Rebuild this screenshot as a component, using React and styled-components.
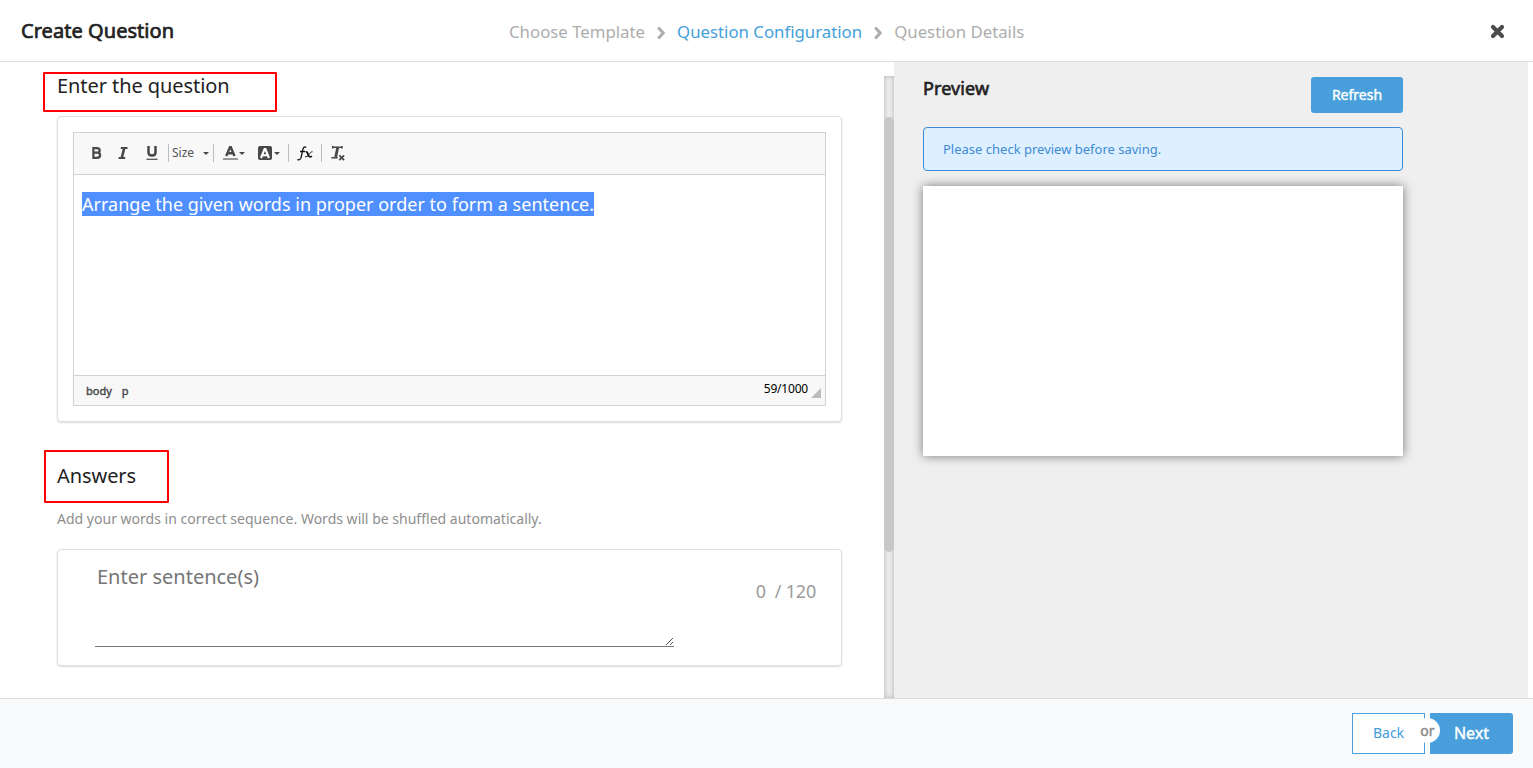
import React from 'react';
import styled, { createGlobalStyle } from 'styled-components';

const GlobalStyle = createGlobalStyle`
  *, *::before, *::after { box-sizing: border-box; }
  body { margin: 0; background: #fff; font-family: "Noto Sans", sans-serif; color: #222; }
`;

const Page = styled.div`
  display: flex;
  flex-direction: column;
  width: 1533px;
  height: 768px;
  overflow: hidden;
`;

const Header = styled.header`
  display: flex;
  align-items: center;
  height: 62px;
  padding: 0 28px 0 21px;
  border-bottom: 1px solid #dcdcdc;
`;

const Title = styled.h1`
  width: 488px;
  margin: 0;
  font-size: 20px;
  font-weight: 400;
  line-height: 28px;
  letter-spacing: 0.05px;
  -webkit-text-stroke: 0.7px #222;
`;

const Steps = styled.nav`
  display: flex;
  align-items: center;
  flex: 1;
  padding-top: 3px;
  font-size: 16.8px;
  line-height: 24px;
  white-space: nowrap;
`;

const Step = styled.span`
  color: ${(p) => (p.$active ? '#43a0da' : '#adadad')};
`;

const StepArrow = styled.svg`
  width: 10px;
  height: 14px;
  margin: 1px 11px 0;
`;

const CloseButton = styled.button`
  display: flex;
  padding: 0;
  margin-top: 2px;
  border: 0;
  background: none;
`;

const Main = styled.main`
  display: flex;
  height: 636px;
`;

const FormPane = styled.section`
  width: 884px;
  padding: 10px 42px 0 57px;
  overflow: hidden;
`;

const SectionTitle = styled.h2`
  position: relative;
  margin: 0;
  font-size: 20px;
  font-weight: 400;
  line-height: 28px;
  letter-spacing: -0.07px;
`;

const RedFrame = styled.span`
  position: absolute;
  left: ${(p) => p.$left}px;
  top: ${(p) => p.$top}px;
  width: ${(p) => p.$width}px;
  height: ${(p) => p.$height}px;
  border: 2px solid #ff0000;
  border-radius: 1px;
`;

const Card = styled.div`
  border: 1px solid #dedede;
  border-radius: 4px;
  box-shadow: 0 1px 2px rgba(0, 0, 0, 0.14);
`;

const QuestionCard = styled(Card)`
  height: 306px;
  margin: 16px 0 40px;
  padding: 15px;
`;

const Editor = styled.div`
  display: flex;
  flex-direction: column;
  height: 274px;
  border: 1px solid #d1d1d1;
`;

const Toolbar = styled.div`
  display: flex;
  align-items: center;
  height: 42px;
  padding: 0 0 1px 14px;
  background: #f8f8f8;
  border-bottom: 1px solid #d1d1d1;
`;

const Tool = styled.div`
  display: flex;
  align-items: center;
  justify-content: center;
  width: ${(p) => p.$width}px;
  height: 18px;
`;

const Divider = styled.span`
  width: 1px;
  height: 18px;
  background: #bcbcbc;
`;

const SizePicker = styled.div`
  display: flex;
  align-items: center;
  justify-content: space-between;
  width: 44px;
  padding: 0 4px 0 3px;
  font-size: 12px;
  line-height: 18px;
  color: #555;
`;

const Caret = styled.span`
  border: 3px solid transparent;
  border-top-color: #484848;
  border-bottom: 0;
  margin-top: 1px;
`;

const EditArea = styled.div`
  flex: 1;
  padding: 16px 8px;
  font-size: 18px;
  line-height: 26px;
  letter-spacing: 0.015px;
`;

const Selected = styled.span`
  color: #fff;
  background: #4f8fff;
`;

const StatusBar = styled.div`
  display: flex;
  height: 30px;
  padding: 0 4px 0 12px;
  background: #f8f8f8;
  border-top: 1px solid #d1d1d1;
`;

const PathItem = styled.span`
  margin-right: 10px;
  font-size: 11px;
  line-height: 29px;
  color: #484848;
  -webkit-text-stroke: 0.4px #484848;
`;

const CharCount = styled.span`
  margin-left: auto;
  font-size: 12px;
  line-height: 25px;
  letter-spacing: -0.2px;
  color: #000;
`;

const Resizer = styled.span`
  align-self: flex-end;
  margin: 0 0 7px 3px;
  border: 5px solid #bcbcbc;
  border-top-color: transparent;
  border-left-color: transparent;
`;

const Hint = styled.p`
  margin: 19px 0 20px;
  font-size: 14px;
  line-height: 20px;
  letter-spacing: 0.01px;
  color: #8e8e8e;
`;

const AnswerCard = styled(Card)`
  display: flex;
  justify-content: space-between;
  height: 117px;
  padding: 13px 25px 18px 37px;
`;

const SentenceField = styled.div`
  display: flex;
  justify-content: space-between;
  width: 579px;
  height: 84px;
  padding-left: 2px;
  border-bottom: 1px solid #757575;
  font-size: 20px;
  line-height: 28px;
  color: #757575;
`;

const Grip = styled.svg`
  align-self: flex-end;
  width: 9px;
  height: 9px;
`;

const WordCount = styled.div`
  padding-top: 14px;
  font-size: 18px;
  line-height: 28px;
  letter-spacing: -0.2px;
  color: #9b9b9b;
  white-space: pre;
`;

const ScrollTrack = styled.div`
  width: 10px;
  height: 622px;
  margin-top: 14px;
  padding-top: 41px;
  background: #ececec;
  box-shadow: inset 0 0 5px rgba(0, 0, 0, 0.25);
`;

const ScrollThumb = styled.div`
  height: 435px;
  border-radius: 5px;
  background: #c8c8c8;
`;

const PreviewPane = styled.aside`
  width: 634px;
  padding: 15px 125px 0 29px;
  background: #efefef;
`;

const PreviewHead = styled.div`
  display: flex;
  justify-content: space-between;
  height: 36px;
`;

const PreviewTitle = styled.h2`
  margin: 0;
  font-size: 18px;
  font-weight: 400;
  line-height: 22px;
  letter-spacing: 0.1px;
  -webkit-text-stroke: 0.65px #222;
`;

const Button = styled.button`
  height: ${(p) => p.$height}px;
  width: ${(p) => p.$width}px;
  padding: 0 0 2px;
  font-family: inherit;
  font-size: ${(p) => p.$size}px;
  color: ${(p) => (p.$outline ? '#3f9ddb' : '#fff')};
  background: ${(p) => (p.$outline ? '#fff' : '#489fdb')};
  border: ${(p) => (p.$outline ? '1px solid #489fdb' : '0')};
  border-radius: ${(p) => p.$radius};
  -webkit-text-stroke: ${(p) => (p.$outline ? '0' : '0.4px #fff')};
`;

const Notice = styled.div`
  height: 44px;
  margin: 14px 0 15px;
  padding-left: 19px;
  border: 1px solid #3d8bd4;
  border-radius: 4px;
  background: #def0ff;
  font-size: 13px;
  line-height: 43px;
  color: #3d8bd4;
`;

const PreviewFrame = styled.div`
  height: 270px;
  background: #fff;
  box-shadow: 0 0 10px rgba(0, 0, 0, 0.5);
`;

const Footer = styled.footer`
  display: flex;
  justify-content: flex-end;
  height: 70px;
  padding: 14px 20px 0;
  background: #f9fafc;
  border-top: 1px solid #dadada;
`;

const ButtonPair = styled.div`
  position: relative;
  display: flex;
  gap: 5px;
`;

const OrBadge = styled.span`
  position: absolute;
  left: 63px;
  top: 5px;
  width: 25px;
  height: 25px;
  border-radius: 50%;
  background: #fff;
  font-size: 14px;
  line-height: 25px;
  text-align: center;
  color: #8e8e8e;
  -webkit-text-stroke: 0.5px #8e8e8e;
`;

function Chevron() {
  return (
    <StepArrow viewBox="0 0 10 14">
      <path d="M2.2 1.6 L7.2 7 L2.2 12.4" fill="none" stroke="#adadad" strokeWidth="3" />
    </StepArrow>
  );
}

function BoldIcon() {
  return (
    <svg width="10" height="12" viewBox="0 0 10 12">
      <path d="M1.4 1.1h3.3c4 0 3.8 4.3.5 4.6 4.1.3 3.8 5.2-.4 5.2H1.4zM2 5.7h3" fill="none" stroke="#484848" strokeWidth="2.2" />
    </svg>
  );
}

function ItalicIcon() {
  return (
    <svg width="10" height="12" viewBox="0 0 10 12">
      <path d="M2.8 1h6.7M.6 11h6.6" stroke="#484848" strokeWidth="2" />
      <path d="M6.2 1L3.8 11" stroke="#484848" strokeWidth="2.6" />
    </svg>
  );
}

function UnderlineIcon() {
  return (
    <svg width="12" height="14" viewBox="0 0 12 14">
      <path d="M2.5 0v6.3c0 4.4 7 4.4 7 0V0" fill="none" stroke="#484848" strokeWidth="2.5" />
      <path d="M.5 13.3h11" stroke="#484848" strokeWidth="1.2" />
    </svg>
  );
}

function TextColorIcon() {
  return (
    <svg width="15" height="14" viewBox="0 0 15 14">
      <path d="M3.2 10L7 1.2h.8L11.5 10M4.8 7.2h5.2" fill="none" stroke="#484848" strokeWidth="2.4" />
      <path d="M0 13h15" stroke="#999" strokeWidth="2" />
    </svg>
  );
}

function FillColorIcon() {
  return (
    <svg width="14" height="14" viewBox="0 0 14 14">
      <rect width="14" height="14" rx="2" fill="#484848" />
      <path d="M3 12L6.6 3h.8l3.6 9M4.5 9.2h5" fill="none" stroke="#fff" strokeWidth="2.1" />
    </svg>
  );
}

function FormulaIcon() {
  return (
    <svg width="16" height="15" viewBox="0 0 16 15">
      <path d="M9.1 1.7C7.8.1 6.3 1 5.8 3.7L4.2 11c-.5 2.6-2 3.4-3.7 2.4M3 5.5h5" fill="none" stroke="#111" strokeWidth="1.3" />
      <path d="M8.7 6c2.3-1.2 2.2 5 4.3 5 .8 0 1.2-.3 1.8-1" fill="none" stroke="#111" strokeWidth="1.7" />
      <path d="M15.5 5.8c-2.6-.8-4.2 6.1-7.5 4.8" fill="none" stroke="#111" strokeWidth="1" />
    </svg>
  );
}

function RemoveFormatIcon() {
  return (
    <svg width="14" height="15" viewBox="0 0 14 15">
      <path d="M1.6 1.2h9.8M1.8 0v2.6M11 0v2.6M.3 11.7h6.4" stroke="#484848" strokeWidth="1.6" />
      <path d="M6.8 1L4.7 11" stroke="#484848" strokeWidth="2.8" />
      <path d="M8.3 9.4l4.8 4.8M13.1 9.4L8.3 14.2" stroke="#484848" strokeWidth="1.7" />
    </svg>
  );
}

export default function App() {
  return (
    <Page>
      <GlobalStyle />
      <Header>
        <Title>Create Question</Title>
        <Steps>
          <Step>Choose Template</Step>
          <Chevron />
          <Step $active>Question Configuration</Step>
          <Chevron />
          <Step>Question Details</Step>
        </Steps>
        <CloseButton aria-label="Close">
          <svg width="15" height="15" viewBox="0 0 15 15">
            <path d="M3 3l9 9M12 3l-9 9" stroke="#4c4c4c" strokeWidth="4.2" strokeLinecap="round" />
          </svg>
        </CloseButton>
      </Header>
      <Main>
        <FormPane>
          <SectionTitle>
            <RedFrame $left={-14} $top={0} $width={234} $height={40} />
            Enter the question
          </SectionTitle>
          <QuestionCard>
            <Editor>
              <Toolbar>
                <Tool $width={18}><BoldIcon /></Tool>
                <Tool $width={34}><ItalicIcon /></Tool>
                <Tool $width={24}><UnderlineIcon /></Tool>
                <Tool $width={4} />
                <Divider />
                <SizePicker>Size<Caret /></SizePicker>
                <Divider />
                <Tool $width={40}><TextColorIcon /><Tool $width={1} /><Caret /></Tool>
                <Tool $width={30}><FillColorIcon /><Tool $width={2} /><Caret /></Tool>
                <Tool $width={4} />
                <Divider />
                <Tool $width={32}><FormulaIcon /></Tool>
                <Divider />
                <Tool $width={32}><RemoveFormatIcon /></Tool>
              </Toolbar>
              <EditArea>
                <Selected>Arrange the given words in proper order to form a sentence.</Selected>
              </EditArea>
              <StatusBar>
                <PathItem>body</PathItem>
                <PathItem>p</PathItem>
                <CharCount>59/1000</CharCount>
                <Resizer />
              </StatusBar>
            </Editor>
          </QuestionCard>
          <SectionTitle>
            <RedFrame $left={-13} $top={-12} $width={125} $height={53} />
            Answers
          </SectionTitle>
          <Hint>Add your words in correct sequence. Words will be shuffled automatically.</Hint>
          <AnswerCard>
            <SentenceField>
              Enter sentence(s)
              <Grip viewBox="0 0 9 9">
                <path d="M1 8L8 1M5 8l3-3" stroke="#555" strokeWidth="1" />
              </Grip>
            </SentenceField>
            <WordCount>{'0  / 120'}</WordCount>
          </AnswerCard>
        </FormPane>
        <ScrollTrack>
          <ScrollThumb />
        </ScrollTrack>
        <PreviewPane>
          <PreviewHead>
            <PreviewTitle>Preview</PreviewTitle>
            <Button $width={92} $height={36} $size={14} $radius="3px">Refresh</Button>
          </PreviewHead>
          <Notice>Please check preview before saving.</Notice>
          <PreviewFrame />
        </PreviewPane>
      </Main>
      <Footer>
        <ButtonPair>
          <Button $outline $width={73} $height={41} $size={14} $radius="0">Back</Button>
          <Button $width={83} $height={41} $size={16} $radius="0 3px 3px 0">Next</Button>
          <OrBadge>or</OrBadge>
        </ButtonPair>
      </Footer>
    </Page>
  );
}
